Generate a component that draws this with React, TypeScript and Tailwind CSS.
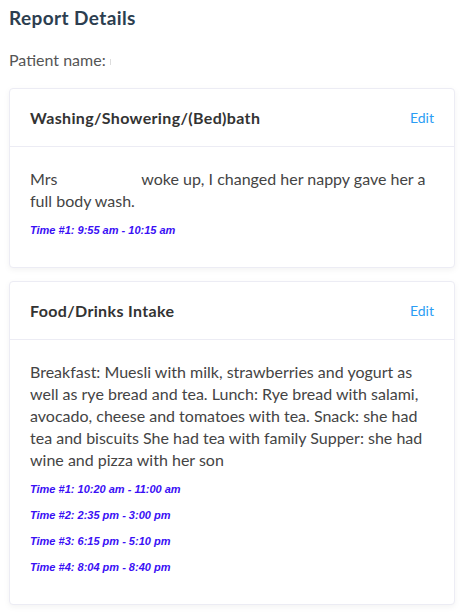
const reports = [
  {
    title: "Washing/Showering/(Bed)bath",
    body: (
      <>
        <span className="mr-[80px]">Mrs</span> woke up, I changed her nappy gave her a full body wash.
      </>
    ),
    times: ["9:55 am - 10:15 am"],
  },
  {
    title: "Food/Drinks Intake",
    body: (
      <>
        Breakfast: Muesli with milk, strawberries and yogurt as well as rye bread and tea. Lunch: Rye bread with
        salami, avocado, cheese and tomatoes with tea. Snack: she had tea and biscuits She had tea with family Supper:
        she had wine and pizza with her son
      </>
    ),
    times: ["10:20 am - 11:00 am", "2:35 pm - 3:00 pm", "6:15 pm - 5:10 pm", "8:04 pm - 8:40 pm"],
  },
];

function ReportCard({ title, body, times }: { title: string; body: React.ReactNode; times: string[] }) {
  return (
    <div className="rounded-[4px] border border-[#ececf4] bg-white shadow-[0_2px_6px_rgba(0,0,0,0.05)]">
      <div className="flex h-[58px] items-center justify-between border-b border-[#ececf4] px-5">
        <h3 className="text-[16px] font-bold tracking-[0.35px] text-[#333333]">{title}</h3>
        <button className="text-[14px] text-[#2a9df4]">Edit</button>
      </div>
      <div className="px-5 pt-[21px] pb-[29px]">
        <p className="text-[16px] leading-[22px] text-[#444444]">{body}</p>
        <div className="mt-[10px] flex flex-col gap-[10px]">
          {times.map((t, i) => (
            <div
              key={i}
              className="h-[16px] text-[11px] leading-[16px] font-bold italic text-[#3a10f5] [font-family:'Liberation_Sans',Arial,sans-serif]"
            >
              Time #{i + 1}: {t}
            </div>
          ))}
        </div>
      </div>
    </div>
  );
}

export default function App() {
  return (
    <div className="min-h-screen bg-white px-[9px] [font-family:Lato,'Noto_Sans',sans-serif]">
      <h1 className="pt-[6px] text-[19px] leading-[24px] font-bold tracking-[0.4px] text-[#2c3e50]">
        Report Details
      </h1>
      <p className="mt-[19px] text-[16px] leading-[22px] text-[#555555]">
        Patient name: <span className="inline-block h-[6px] w-[1px] bg-[#dddddd] align-middle" />
      </p>
      <div className="mt-[17px] flex flex-col gap-[13px]">
        {reports.map((r) => (
          <ReportCard key={r.title} title={r.title} body={r.body} times={r.times} />
        ))}
      </div>
    </div>
  );
}
